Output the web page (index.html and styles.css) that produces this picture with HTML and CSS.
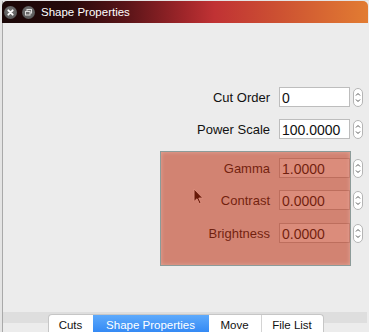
FILE: index.html
```html
<!DOCTYPE html>
<html lang="en">
<head>
    <meta charset="UTF-8">
    <meta name="viewport" content="width=device-width, initial-scale=1.0">
    <title>Shape Properties</title>
    <link rel="stylesheet" href="styles.css">
</head>
<body>
    <div class="window">
        <div class="titlebar">
            <span class="title-btn">
                <svg width="13" height="13" viewBox="0 0 13 13">
                    <path d="M4.3 4.3 L8.7 8.7 M8.7 4.3 L4.3 8.7" stroke="#fff" stroke-width="1.8" stroke-linecap="round"/>
                </svg>
            </span>
            <span class="title-btn">
                <svg width="13" height="13" viewBox="0 0 13 13">
                    <rect x="5" y="3.5" width="4.5" height="3.5" fill="none" stroke="#ddd" stroke-width="1"/>
                    <rect x="3.5" y="5.5" width="4.5" height="3.5" fill="#6a6a6a" stroke="#ddd" stroke-width="1"/>
                </svg>
            </span>
            <span class="title-text">Shape Properties</span>
        </div>

        <div class="form">
            <div class="row">
                <label class="field-label">Cut Order</label>
                <input class="field-input" type="text" value="0">
                <span class="spinner"></span>
            </div>
            <div class="row">
                <label class="field-label">Power Scale</label>
                <input class="field-input" type="text" value="100.0000">
                <span class="spinner"></span>
            </div>

            <div class="group">
                <div class="row">
                    <label class="field-label">Gamma</label>
                    <input class="field-input" type="text" value="1.0000">
                    <span class="spinner"></span>
                </div>
                <div class="row">
                    <label class="field-label">Contrast</label>
                    <input class="field-input" type="text" value="0.0000">
                    <span class="spinner"></span>
                </div>
                <div class="row">
                    <label class="field-label">Brightness</label>
                    <input class="field-input" type="text" value="0.0000">
                    <span class="spinner"></span>
                </div>
                <svg class="cursor" width="12" height="17" viewBox="0 0 12 17">
                    <path d="M1 1 L1 13.5 L4 10.8 L6.2 15.6 L8 14.8 L5.8 10.1 L9.8 10.1 Z" fill="#000" stroke="#fff" stroke-width="1"/>
                </svg>
                <div class="highlight"></div>
            </div>
        </div>

        <div class="tabbar">
            <div class="tabs">
                <span class="tab tab-cuts">Cuts</span>
                <span class="tab tab-shape active">Shape Properties</span>
                <span class="tab tab-move">Move</span>
                <span class="tab tab-files">File List</span>
            </div>
        </div>
    </div>
</body>
</html>
```

FILE: styles.css
```css
body {
    margin: 0;
    background-color: #e4e4e4;
    font-family: "Liberation Sans", Arial, sans-serif;
    color: #111;
}

.window {
    display: flex;
    flex-direction: column;
    height: 331px;
    margin-top: 1px;
    margin-left: 2px;
    border-left: 1px solid #a9a9a9;
    background-color: #ececec;
}

.titlebar {
    display: flex;
    align-items: center;
    height: 22px;
    margin-left: -1px;
    margin-right: 1px;
    padding-left: 2px;
    border-radius: 5px 5px 0 0;
    background: linear-gradient(to right, #1a0707 0%, #260a0b 18%, #5a1418 34%, #a0262a 50%, #c03234 58%, #cc5032 75%, #e27c32 100%);
}

.title-btn {
    display: flex;
    align-items: center;
    justify-content: center;
    width: 13px;
    height: 13px;
    margin-right: 5px;
    border-radius: 50%;
    background: radial-gradient(circle at 50% 40%, #7a7a7a, #4a4a4a);
}

.title-text {
    margin-left: 1px;
    font-size: 11.5px;
    color: #fff;
}

.form {
    display: flex;
    flex-direction: column;
    padding-top: 64px;
}

.row {
    display: flex;
    align-items: center;
    justify-content: flex-end;
    height: 20px;
    margin-bottom: 12px;
    padding-right: 6px;
}

.field-label {
    margin-right: 9px;
    font-size: 13px;
    text-align: right;
}

.field-input {
    box-sizing: border-box;
    width: 71px;
    height: 20px;
    margin: 0;
    padding: 1px 2px 0;
    border: 1px solid #bdbdbd;
    background-color: #fff;
    font-family: "Liberation Sans", Arial, sans-serif;
    font-size: 14px;
    color: #111;
    outline: none;
}

.spinner {
    box-sizing: border-box;
    width: 10px;
    height: 19px;
    margin-left: 3px;
    border: 1px solid #b5b5b5;
    border-radius: 5px;
    background-color: #fff;
    background-image:
        url("data:image/svg+xml,%3Csvg xmlns='http://www.w3.org/2000/svg' width='8' height='17'%3E%3Cpath d='M2 6.5 L4 4.5 L6 6.5 M2 10.5 L4 12.5 L6 10.5' fill='none' stroke='%23555' stroke-width='1'/%3E%3C/svg%3E");
    background-repeat: no-repeat;
}

.group {
    position: relative;
    padding: 7px 0 11px;
}

.group .row:nth-child(2) {
    margin-bottom: 13px;
}

.highlight {
    position: absolute;
    top: 0;
    bottom: 0;
    left: 157px;
    right: 18px;
    border: 1px solid #8c9b99;
    background-color: rgba(190, 45, 15, 0.55);
    box-shadow: inset 0 0 4px rgba(255, 235, 225, 0.35);
}

.cursor {
    position: absolute;
    left: 190px;
    top: 37px;
}

.tabbar {
    display: flex;
    justify-content: center;
    height: 22px;
    margin-top: auto;
    margin-right: 2px;
    background: linear-gradient(to bottom, #ececec 0, #ececec 2px, #dedede 2px, #dedede 13px, #ececec 13px);
}

.tabs {
    display: flex;
    height: 19px;
    margin-top: 4px;
    margin-left: 1px;
    border: 1px solid #c6c6c6;
    border-bottom: none;
    border-radius: 4px 4px 0 0;
    background-color: #fff;
    font-size: 11.5px;
}

.tab {
    display: flex;
    align-items: center;
    justify-content: center;
    border-left: 1px solid #d4d4d4;
}

.tab:first-child {
    border-left: none;
}

.tab-cuts { width: 44px; }
.tab-shape { width: 116px; }
.tab-move { width: 52px; }
.tab-files { width: 61px; }

.tab.active {
    border-left: none;
    background: linear-gradient(to bottom, #5eaafb, #2f86f4);
    color: #fff;
}

.tab.active + .tab {
    border-left: none;
}
```
